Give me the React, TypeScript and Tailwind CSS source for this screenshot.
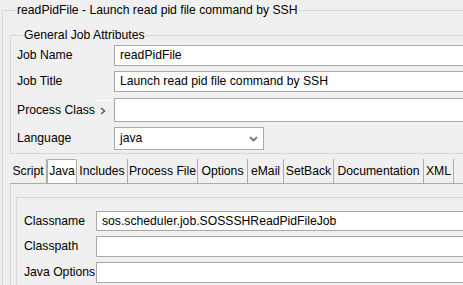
import React from 'react';

const tabs = [
    { name: 'Script', w: 37 },
    { name: 'Java', w: 30 },
    { name: 'Includes', w: 51 },
    { name: 'Process File', w: 70 },
    { name: 'Options', w: 50 },
    { name: 'eMail', w: 36 },
    { name: 'SetBack', w: 50 },
    { name: 'Documentation', w: 90 },
    { name: 'XML', w: 30 },
];

function TextBox({ value, h }: { value?: string; h: string }) {
    return (
        <div className={`flex-1 ${h} bg-white border border-[#a9a9a9] flex items-center pl-[5px] whitespace-nowrap`}>
            {value}
        </div>
    );
}

export default function App() {
    const selected = 'Java';

    return (
        <div
            className="w-[463px] h-[285px] overflow-hidden bg-[#f0f0f0] text-[12.2px] text-black"
            style={{ fontFamily: '"Liberation Sans", Arial, sans-serif' }}
        >
            {/* Outer group */}
            <fieldset className="ml-[2px] mt-[2px] w-[520px] h-[400px] border border-[#d8d8d8] pl-[7px]">
                <legend className="ml-[6px] px-[1px] leading-[16px] whitespace-nowrap">
                    readPidFile - Launch read pid file command by SSH
                </legend>

                {/* General Job Attributes */}
                <fieldset className="mt-[9px] border border-[#d8d8d8] pl-[6px] pt-[2px] pb-[3px]">
                    <legend className="ml-[6px] px-[1px] leading-[16px]">General Job Attributes</legend>

                    <div className="flex items-center h-[21px]">
                        <div className="w-[97px]">Job Name</div>
                        <TextBox value="readPidFile" h="h-[21px]" />
                    </div>
                    <div className="flex items-center h-[21px] mt-[5px]">
                        <div className="w-[97px]">Job Title</div>
                        <TextBox value="Launch read pid file command by SSH" h="h-[21px]" />
                    </div>
                    <div className="flex items-center h-[24px] mt-[6px]">
                        <div className="w-[97px] flex items-center justify-between pr-[4px]">
                            <span className="whitespace-nowrap">Process Class</span>
                            <span className="w-[14px] h-[20px] border-t border-white flex items-center justify-center">
                                <svg width="6" height="8" viewBox="0 0 6 8">
                                    <path d="M1 1 L4.5 4 L1 7" fill="none" stroke="#606060" strokeWidth="1.6" />
                                </svg>
                            </span>
                        </div>
                        <TextBox h="h-[24px]" />
                    </div>
                    <div className="flex items-center h-[23px] mt-[5px]">
                        <div className="w-[97px]">Language</div>
                        <div className="w-[150px] h-[23px] bg-white border border-[#a9a9a9] flex items-center justify-between pl-[5px] pr-[5px]">
                            <span>java</span>
                            <svg width="9" height="6" viewBox="0 0 9 6">
                                <path d="M1 1 L4.5 4.5 L8 1" fill="none" stroke="#606060" strokeWidth="1.6" />
                            </svg>
                        </div>
                    </div>
                </fieldset>

                {/* Tabs */}
                <div className="mt-[5px] flex h-[25px] border-b border-[#acacac]">
                    {tabs.map(t => (
                        <div
                            key={t.name}
                            style={{ width: t.w }}
                            className={`h-[24px] flex items-center justify-center whitespace-nowrap border-r border-[#acacac] ${t.name === selected ? 'bg-white border-l border-t rounded-t-[2px]' : ''
                                }`}
                        >
                            {t.name}
                        </div>
                    ))}
                </div>

                {/* Tab panel */}
                <div className="border-l border-[#d8d8d8] pl-[5px] pt-[13px] h-[200px]">
                    <fieldset className="border border-[#d8d8d8] pl-[7px]">
                        <div className="flex items-center h-[20px] mt-[13px]">
                            <div className="w-[72px]">Classname</div>
                            <TextBox value="sos.scheduler.job.SOSSSHReadPidFileJob" h="h-[20px]" />
                        </div>
                        <div className="flex items-center h-[21px] mt-[5px]">
                            <div className="w-[72px]">Classpath</div>
                            <TextBox h="h-[21px]" />
                        </div>
                        <div className="flex items-center h-[21px] mt-[5px]">
                            <div className="w-[72px] whitespace-nowrap">Java Options</div>
                            <TextBox h="h-[21px]" />
                        </div>
                        <div className="h-[40px]" />
                    </fieldset>
                </div>
            </fieldset>
        </div>
    );
}
